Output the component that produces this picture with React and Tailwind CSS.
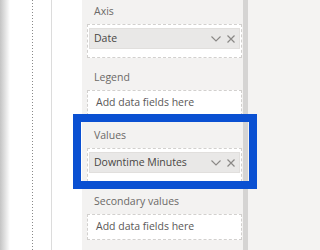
const font = { fontFamily: '"Open Sans", "Noto Sans", sans-serif' };

const Chevron = () => (
  <svg width="10" height="6" viewBox="0 0 10 6" fill="none" stroke="#8a8886" strokeWidth="1.1">
    <path d="M0.5 0.5 L5 5 L9.5 0.5" />
  </svg>
);

const Close = () => (
  <svg width="8" height="8" viewBox="0 0 8 8" fill="none" stroke="#8a8886" strokeWidth="1.2">
    <path d="M0.5 0.5 L7.5 7.5 M7.5 0.5 L0.5 7.5" />
  </svg>
);

const Label = ({ children }) => (
  <div className="h-4 leading-4 pl-[7px] mb-[5px] text-[10.5px] text-[#6b6967]">{children}</div>
);

const FieldWell = ({ field }) => {
  if (!field) {
    return (
      <div className="h-[26px] bg-white border border-dashed border-[#d2d0ce] flex items-center pl-2 text-[10.5px] text-[#5a5857]">
        Add data fields here
      </div>
    );
  }
  return (
    <div className="bg-white border border-dashed border-[#d2d0ce] pt-[3px] pb-2 px-px">
      <div className="h-[21px] bg-[#e9e8e7] border border-[#e1dfdd] flex items-center pl-[4px] pr-[4px] text-[10.5px] text-[#484644]">
        <span className="flex-1">{field}</span>
        <span className="flex items-center gap-[6px]">
          <Chevron />
          <Close />
        </span>
      </div>
    </div>
  );
};

const Section = ({ label, field, first }) => (
  <div className={first ? "pt-[3px]" : "mt-[11px]"}>
    <Label>{label}</Label>
    <FieldWell field={field} />
  </div>
);

export default function App() {
  return (
    <div className="relative w-[320px] h-[250px] flex overflow-hidden bg-white" style={font}>
      {/* canvas edge */}
      <div className="w-[82px] h-full flex bg-white">
        <div className="w-[10px] h-full bg-gradient-to-r from-[#c4c4c4] to-white" />
        <div className="w-[22px]" />
        <div className="w-px h-full bg-[linear-gradient(#8a8a8a_50%,transparent_50%)] bg-[length:1px_3px]" />
        <div className="w-[18px]" />
        <div className="w-px h-full bg-[#dcdcdc]" />
      </div>

      {/* fields pane */}
      <div className="w-[161px] h-full bg-[#f3f2f1] pl-[5px] pr-px">
        <Section label="Axis" field="Date" first />
        <Section label="Legend" />
        <Section label="Values" field="Downtime Minutes" />
        <Section label="Secondary values" />
      </div>
      <div className="w-[5px] h-full bg-[#d5d4d3]" />
      <div className="flex-1 h-full bg-[#f4f3f2]" />

      {/* highlight */}
      <div className="absolute left-[73px] top-[114px] w-[184px] h-[75px] border-[8px] border-[#0a50d2]" />
    </div>
  );
}
